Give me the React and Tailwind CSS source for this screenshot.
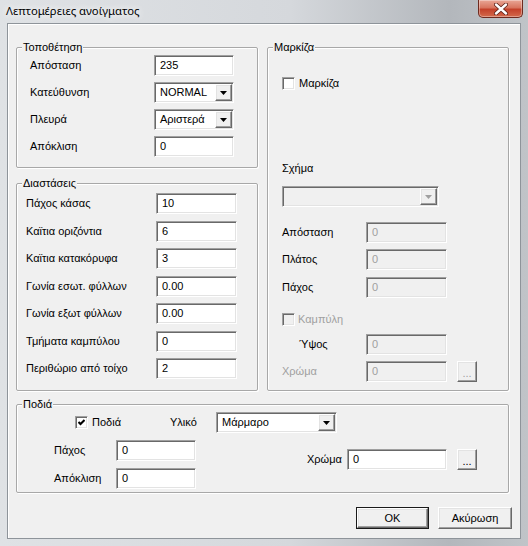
import React from "react";

const sunken =
  "border border-t-[#a0a0a0] border-l-[#a0a0a0] border-r-white border-b-white shadow-[inset_1px_1px_0_#696969,inset_-1px_-1px_0_#e3e3e3]";
const raised =
  "border border-t-white border-l-white border-r-[#696969] border-b-[#696969] shadow-[inset_-1px_-1px_0_#a0a0a0,inset_1px_1px_0_#e3e3e3]";

function Edit({ value, w, disabled }) {
  return (
    <div
      className={`${w} h-[21px] shrink-0 ${sunken} ${
        disabled ? "bg-[#f0f0f0] text-[#a0a0a0]" : "bg-white text-black"
      } flex items-center pl-[5px]`}
    >
      {value}
    </div>
  );
}

function Arrow({ disabled }) {
  return (
    <svg width="7" height="4" viewBox="0 0 7 4">
      <path d="M0 0H7L3.5 4Z" fill={disabled ? "#a0a0a0" : "#000"} />
    </svg>
  );
}

function Combo({ value, w, disabled }) {
  return (
    <div
      className={`${w} h-[21px] shrink-0 ${sunken} ${
        disabled ? "bg-[#f0f0f0]" : "bg-white"
      } flex items-center justify-between pl-[5px] pr-[1px]`}
    >
      <span>{value}</span>
      <div
        className={`w-[17px] h-[17px] ${raised} bg-[#f0f0f0] flex items-center justify-center`}
      >
        <Arrow disabled={disabled} />
      </div>
    </div>
  );
}

function Check({ checked, disabled }) {
  return (
    <div
      className={`w-[13px] h-[13px] shrink-0 ${sunken} ${
        disabled ? "bg-[#f0f0f0]" : "bg-white"
      } flex items-center justify-center`}
    >
      {checked && (
        <svg width="7" height="7" viewBox="0 0 7 7">
          <polyline
            points="0.5,3 2.5,5 6.5,1"
            fill="none"
            stroke="#000"
            strokeWidth="2"
          />
        </svg>
      )}
    </div>
  );
}

function Dots({ disabled }) {
  return (
    <div
      className={`w-[20px] h-[21px] shrink-0 ${raised} bg-[#f0f0f0] flex items-end justify-center pb-[3px] leading-[10px] ${
        disabled ? "text-[#a0a0a0]" : "text-black"
      }`}
    >
      ...
    </div>
  );
}

function Group({ title, className, children }) {
  return (
    <div
      className={`relative border border-[#a8a8a8] rounded-[2px] shadow-[1px_1px_0_#fff,inset_1px_1px_0_#fff] ${className}`}
    >
      <span className="absolute left-[5px] top-[-8px] bg-[#f0f0f0] px-[1px] leading-[14px] whitespace-nowrap">
        {title}
      </span>
      {children}
    </div>
  );
}

function Row({ label, children, lw }) {
  return (
    <div className="flex items-center">
      <span className={`${lw} shrink-0 whitespace-nowrap`}>{label}</span>
      {children}
    </div>
  );
}

export default function App() {
  return (
    <div className="w-[528px] h-[546px] overflow-hidden flex flex-col bg-[linear-gradient(to_right,#dfe2e5_0%,#d5d8dc_55%,#b3b7bc_85%,#c0c4c8_100%)] font-['Liberation_Sans',Arial,sans-serif] text-[11px] text-black">
      {/* Title bar */}
      <div className="h-[23px] flex items-start justify-between shrink-0">
        <span className="ml-[6px] mt-[3px] leading-[16px] text-[11.3px] font-['Noto_Sans',sans-serif] [text-shadow:0_0_6px_#fff,0_0_10px_#fff]">
          Λεπτομέρειες ανοίγματος
        </span>
        <div className="mr-[5px] w-[45px] h-[18px] rounded-b-[5px] border border-t-0 border-[#6e2a1f] bg-[linear-gradient(to_bottom,#e9a796_0%,#d8755f_45%,#c4412a_55%,#d36a4c_100%)] shadow-[inset_0_0_0_1px_rgba(255,255,255,0.35)] flex items-center justify-center">
          <svg width="14" height="12" viewBox="0 0 14 12">
            <path
              d="M2 1.5L12 10.5M12 1.5L2 10.5"
              stroke="#5a1d14"
              strokeWidth="4"
              strokeLinecap="round"
            />
            <path
              d="M2 1.5L12 10.5M12 1.5L2 10.5"
              stroke="#fff"
              strokeWidth="2.4"
              strokeLinecap="round"
            />
          </svg>
        </div>
      </div>

      {/* Client area */}
      <div className="ml-[7px] w-[514px] h-[516px] shrink-0 border border-[#8e949a] bg-[#f0f0f0] shadow-[inset_1px_1px_0_#fff] pl-[8px] pt-[23px] flex flex-col">
        <div className="flex gap-[9px] h-[344px]">
          {/* Left column */}
          <div className="w-[242px] flex flex-col gap-[15px]">
            <Group title="Τοποθέτηση" className="h-[121px]">
              <div className="pl-[13px] pt-[7px] flex flex-col gap-[6px]">
                <Row label="Απόσταση" lw="w-[124px]">
                  <Edit value="235" w="w-[80px]" />
                </Row>
                <Row label="Κατεύθυνση" lw="w-[124px]">
                  <Combo value="NORMAL" w="w-[80px]" />
                </Row>
                <Row label="Πλευρά" lw="w-[124px]">
                  <Combo value="Αριστερά" w="w-[80px]" />
                </Row>
                <Row label="Απόκλιση" lw="w-[124px]">
                  <Edit value="0" w="w-[80px]" />
                </Row>
              </div>
            </Group>
            <Group title="Διαστάσεις" className="h-[208px]">
              <div className="pl-[9px] pt-[9px] flex flex-col gap-[6.5px]">
                <Row label="Πάχος κάσας" lw="w-[130px]">
                  <Edit value="10" w="w-[81px]" />
                </Row>
                <Row label="Καϊτια οριζόντια" lw="w-[130px]">
                  <Edit value="6" w="w-[81px]" />
                </Row>
                <Row label="Καϊτια κατακόρυφα" lw="w-[130px]">
                  <Edit value="3" w="w-[81px]" />
                </Row>
                <Row label="Γωνία εσωτ. φύλλων" lw="w-[130px]">
                  <Edit value="0.00" w="w-[81px]" />
                </Row>
                <Row label="Γωνία εξωτ φύλλων" lw="w-[130px]">
                  <Edit value="0.00" w="w-[81px]" />
                </Row>
                <Row label="Τμήματα καμπύλου" lw="w-[130px]">
                  <Edit value="0" w="w-[81px]" />
                </Row>
                <Row label="Περιθώριο από τοίχο" lw="w-[130px]">
                  <Edit value="2" w="w-[81px]" />
                </Row>
              </div>
            </Group>
          </div>

          {/* Right column */}
          <Group title="Μαρκίζα" className="w-[242px] h-[344px]">
            <div className="pl-[14px] flex flex-col">
              <div className="mt-[29px] h-[13px] flex items-center gap-[4px]">
                <Check />
                <span>Μαρκίζα</span>
              </div>
              <div className="mt-[71px] h-[14px] leading-[14px]">Σχήμα</div>
              <div className="mt-[11px]">
                <Combo value="" w="w-[157px]" disabled />
              </div>
              <div className="mt-[15px]">
                <Row label="Απόσταση" lw="w-[84px]">
                  <Edit value="0" w="w-[81px]" disabled />
                </Row>
              </div>
              <div className="mt-[6px]">
                <Row label="Πλάτος" lw="w-[84px]">
                  <Edit value="0" w="w-[81px]" disabled />
                </Row>
              </div>
              <div className="mt-[7px]">
                <Row label="Πάχος" lw="w-[84px]">
                  <Edit value="0" w="w-[81px]" disabled />
                </Row>
              </div>
              <div className="mt-[15px] h-[13px] flex items-center gap-[3px]">
                <Check disabled />
                <span className="text-[#a0a0a0]">Καμπύλη</span>
              </div>
              <div className="mt-[8px]">
                <Row label={<span className="pl-[17px]">Ύψος</span>} lw="w-[84px]">
                  <Edit value="0" w="w-[81px]" disabled />
                </Row>
              </div>
              <div className="mt-[6px] flex items-center">
                <span className="w-[84px] shrink-0 text-[#a0a0a0]">Χρώμα</span>
                <Edit value="0" w="w-[81px]" disabled />
                <div className="ml-[10px]">
                  <Dots disabled />
                </div>
              </div>
            </div>
          </Group>
        </div>

        {/* Ποδιά */}
        <Group title="Ποδιά" className="mt-[13px] w-[493px] h-[89px]">
          <div className="flex flex-col">
            <div className="mt-[7px] pl-[58px] h-[21px] flex items-center">
              <div className="w-[95px] flex items-center gap-[4px]">
                <Check checked />
                <span>Ποδιά</span>
              </div>
              <span className="w-[46px] shrink-0">Υλικό</span>
              <Combo value="Μάρμαρο" w="w-[121px]" />
            </div>
            <div className="mt-[7px] pl-[37px] flex items-start">
              <div className="flex flex-col gap-[7px]">
                <Row label="Πάχος" lw="w-[62px]">
                  <Edit value="0" w="w-[80px]" />
                </Row>
                <Row label="Απόκλιση" lw="w-[62px]">
                  <Edit value="0" w="w-[80px]" />
                </Row>
              </div>
              <div className="ml-[111px] mt-[9px] flex items-center">
                <span className="w-[40px] shrink-0">Χρώμα</span>
                <Edit value="0" w="w-[100px]" />
                <div className="ml-[10px]">
                  <Dots />
                </div>
              </div>
            </div>
          </div>
        </Group>

        {/* Buttons */}
        <div className="mt-[14px] pr-[8px] flex justify-end gap-[9px]">
          <div className="w-[73px] h-[22px] border border-[#1a1a1a]">
            <div
              className={`w-full h-full ${raised} bg-[#f0f0f0] flex items-center justify-center`}
            >
              OK
            </div>
          </div>
          <div
            className={`w-[74px] h-[22px] ${raised} bg-[#f0f0f0] flex items-center justify-center`}
          >
            Ακύρωση
          </div>
        </div>
      </div>
    </div>
  );
}
